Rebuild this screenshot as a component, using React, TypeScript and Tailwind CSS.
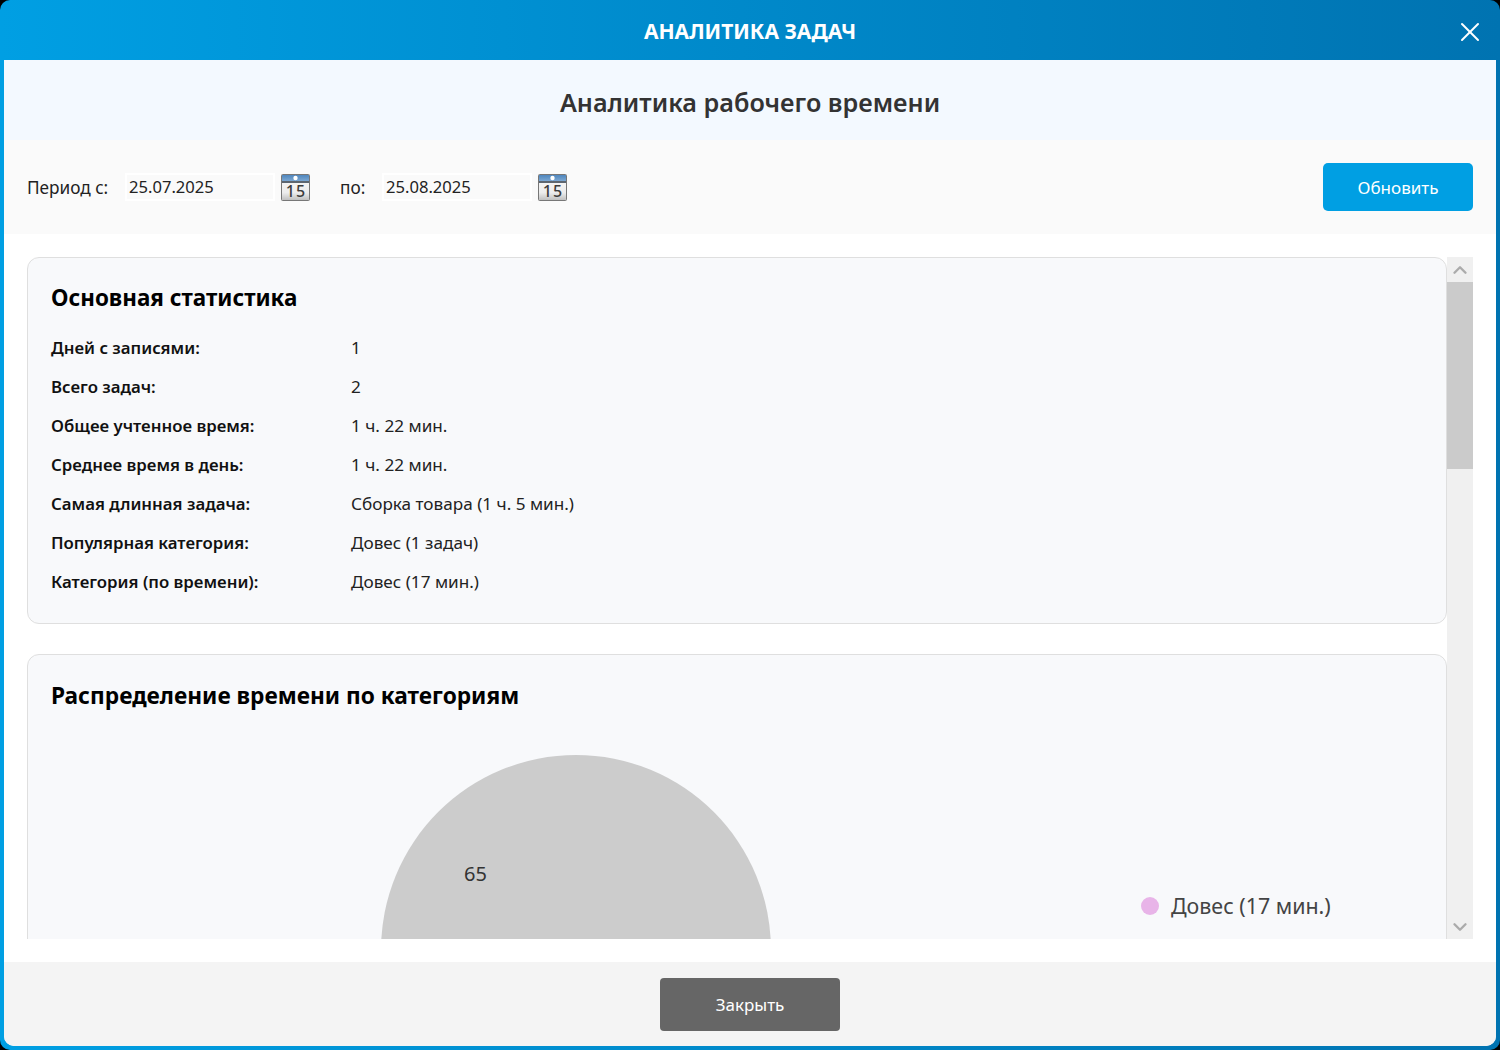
import { ChevronDown, ChevronUp, X } from 'lucide-react';

const stats = [
  ['Дней с записями:', '1'],
  ['Всего задач:', '2'],
  ['Общее учтенное время:', '1 ч. 22 мин.'],
  ['Среднее время в день:', '1 ч. 22 мин.'],
  ['Самая длинная задача:', 'Сборка товара (1 ч. 5 мин.)'],
  ['Популярная категория:', 'Довес (1 задач)'],
  ['Категория (по времени):', 'Довес (17 мин.)'],
];

const CalendarIcon = () => (
  <svg width="29" height="27" viewBox="0 0 29 27" className="shrink-0">
    <defs>
      <linearGradient id="calBody" x1="0" y1="0" x2="0" y2="1">
        <stop offset="0" stopColor="#fbfbfb" />
        <stop offset="0.7" stopColor="#ececec" />
        <stop offset="1" stopColor="#bdbdbd" />
      </linearGradient>
      <linearGradient id="calTop" x1="0" y1="0" x2="0" y2="1">
        <stop offset="0" stopColor="#4f86bd" />
        <stop offset="1" stopColor="#7ba7d3" />
      </linearGradient>
    </defs>
    <rect x="0.5" y="0.5" width="28" height="26" rx="1" fill="url(#calBody)" stroke="#777" />
    <rect x="1" y="1" width="27" height="6" fill="url(#calTop)" />
    <rect x="1" y="7" width="27" height="2" fill="#5d6670" />
    <circle cx="14.5" cy="4" r="2.2" fill="#ffffff" />
    <text x="15" y="22.5" textAnchor="middle" fontSize="16" fontWeight="500" fill="#3c3c3c" letterSpacing="1.2">
      15
    </text>
  </svg>
);

const DateField = ({ value }: { value: string }) => (
  <div className="flex items-center gap-[6px]">
    <div className="h-[28px] w-[150px] border-2 border-white pl-[2px] text-[16.6px] leading-[23px] text-[#222]">
      {value}
    </div>
    <CalendarIcon />
  </div>
);

export default function App() {
  return (
    <div className="h-[1050px] w-[1500px] overflow-hidden bg-black font-['Noto_Sans',sans-serif]">
      <div className="flex h-full flex-col rounded-[10px] bg-gradient-to-r from-[#009fe3] to-[#0073b1] px-[4px] pb-[4px]">
        <div className="relative -mx-[4px] flex h-[60px] shrink-0 items-center justify-center">
          <h1 className="pt-[3px] text-[21px] font-bold text-white">АНАЛИТИКА ЗАДАЧ</h1>
          <X className="absolute right-[14px] top-[16px] text-white" size={32} strokeWidth={1.5} />
        </div>

        <div className="flex min-h-0 flex-1 flex-col rounded-b-[10px] bg-white">
          <div className="flex h-[80px] shrink-0 items-center justify-center bg-[#f3f9ff]">
            <h2 className="pt-[6px] text-[25.2px] font-semibold text-[#333]">Аналитика рабочего времени</h2>
          </div>

          <div className="flex h-[94px] shrink-0 items-center bg-[#fafafa] pl-[23px] pr-[23px]">
            <span className="w-[98px] pt-[2px] text-[17.2px] text-[#222]">Период с:</span>
            <DateField value="25.07.2025" />
            <span className="ml-[30px] w-[42px] pt-[2px] text-[17.2px] text-[#222]">по:</span>
            <DateField value="25.08.2025" />
            <button className="ml-auto h-[48px] w-[150px] rounded-[5px] bg-[#009fe3] pt-[2px] text-[17px] text-white">
              Обновить
            </button>
          </div>

          <div className="flex min-h-0 flex-1 p-[23px]">
            <div className="min-w-0 flex-1 overflow-hidden">
              <section className="h-[367px] rounded-[12px] border border-[#dfdfdf] bg-[#f8f9fb] px-[23px] pt-[24px]">
                <h3 className="h-[32px] text-[22.45px] font-bold leading-[32px] text-black">Основная статистика</h3>
                <div className="mt-[14px] flex flex-col">
                  {stats.map(([label, value]) => (
                    <div key={label} className="flex h-[39px] items-center text-[#222]">
                      <span className="w-[300px] text-[16.8px] font-semibold text-[#111]">{label}</span>
                      <span className="text-[17.15px]">{value}</span>
                    </div>
                  ))}
                </div>
              </section>

              <section className="mt-[30px] h-[400px] rounded-[12px] border border-[#dfdfdf] bg-[#f8f9fb] px-[23px] pt-[25px]">
                <h3 className="h-[32px] text-[22.7px] font-bold leading-[32px] text-black">
                  Распределение времени по категориям
                </h3>
                <div className="relative mt-[43px] flex">
                  <svg width="1000" height="400" viewBox="0 0 1000 400" className="shrink-0">
                    <circle cx="525" cy="195" r="195" fill="#cccccc" />
                    <text x="424.5" y="126" textAnchor="middle" fontSize="20" fill="#333">
                      65
                    </text>
                  </svg>
                  <div className="absolute left-[1090px] top-[135px] flex items-center gap-[12px] text-[21.4px] leading-[32px] text-[#444]">
                    <span className="h-[18px] w-[18px] rounded-full bg-[#e8b4e8]" />
                    <span className="whitespace-nowrap">Довес (17 мин.)</span>
                  </div>
                </div>
              </section>
            </div>

            <div className="flex w-[26px] shrink-0 flex-col bg-[#f0f0f0]">
              <div className="flex h-[25px] items-center justify-center">
                <ChevronUp size={22} strokeWidth={2.6} className="text-[#ababab]" />
              </div>
              <div className="h-[187px] bg-[#cbcbcb]" />
              <div className="flex-1" />
              <div className="flex h-[25px] items-center justify-center">
                <ChevronDown size={22} strokeWidth={2.6} className="text-[#ababab]" />
              </div>
            </div>
          </div>

          <div className="flex h-[84px] shrink-0 items-center justify-center rounded-b-[10px] bg-[#f4f4f4]">
            <button className="h-[53px] w-[180px] rounded-[4px] bg-[#666666] pt-[2px] text-[17px] text-white">
              Закрыть
            </button>
          </div>
        </div>
      </div>
    </div>
  );
}
